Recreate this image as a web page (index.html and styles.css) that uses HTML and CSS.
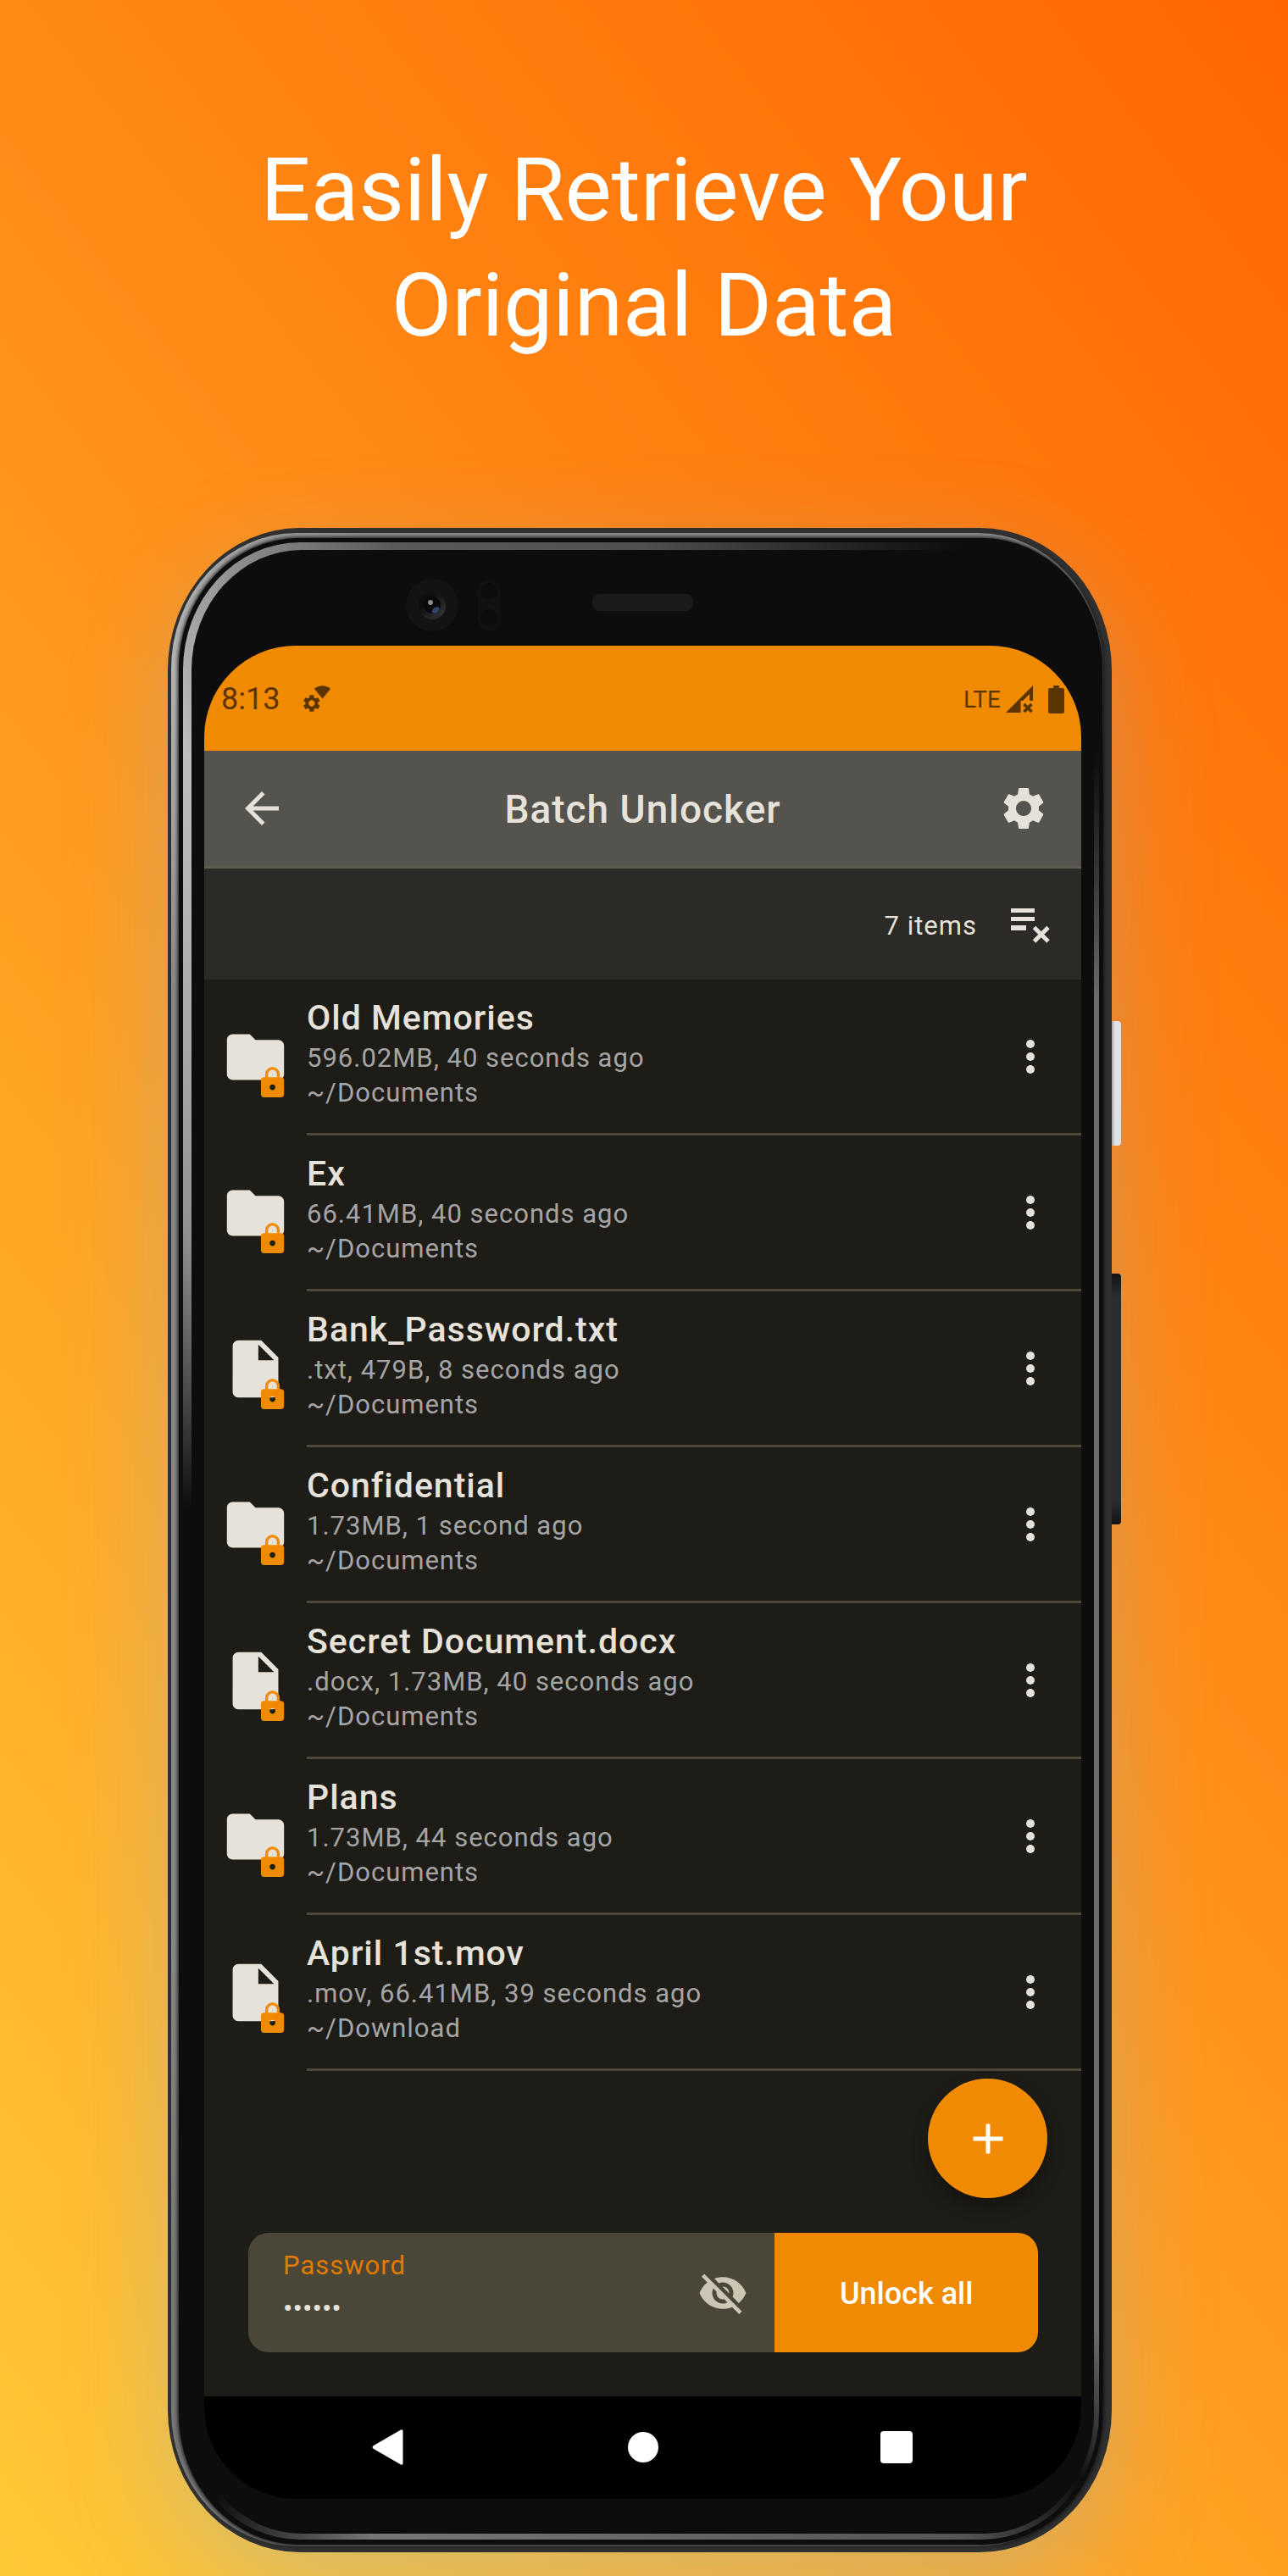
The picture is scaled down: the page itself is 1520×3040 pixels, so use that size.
FILE: index.html
```html
<!DOCTYPE html>
<html lang="en">
<head>
<meta charset="utf-8">
<meta name="viewport" content="width=device-width, initial-scale=1">
<title>Batch Unlocker</title>
<link rel="stylesheet" href="styles.css">
</head>
<body>
<svg class="defs" width="0" height="0" aria-hidden="true">
  <defs>
    <path id="lock-shape" d="M18 8h-1V6c0-2.760-2.240-5-5-5S7 3.240 7 6v2H6c-1.100 0-2 .9-2 2v10c0 1.100.9 2 2 2h12c1.100 0 2-.9 2-2V10c0-1.100-.9-2-2-2zm-6 9c-1.100 0-2-.9-2-2s.9-2 2-2 2 .9 2 2-.9 2-2 2zm3.100-9H8.900V6c0-1.710 1.390-3.100 3.100-3.100 1.710 0 3.100 1.390 3.100 3.100v2z"/>
    <path id="gear-shape" d="M19.140 12.940c.04-.3.060-.61.060-.94 0-.32-.02-.64-.07-.94l2.030-1.580c.18-.14.23-.41.120-.61l-1.920-3.320c-.12-.22-.37-.29-.59-.22l-2.390.96c-.5-.38-1.030-.7-1.620-.94l-.36-2.540c-.04-.24-.24-.41-.48-.41h-3.840c-.24 0-.43.17-.47.41l-.36 2.540c-.59.24-1.130.57-1.620.94l-2.390-.96c-.22-.08-.47 0-.59.22L2.740 8.870c-.12.21-.08.47.120.61l2.030 1.580c-.05.3-.09.63-.09.94s.02.64.070.94l-2.030 1.580c-.18.14-.23.41-.12.61l1.920 3.320c.12.22.37.29.59.22l2.390-.96c.5.38 1.030.7 1.620.94l.36 2.540c.05.24.24.41.48.41h3.840c.24 0 .44-.17.47-.41l.36-2.540c.59-.24 1.130-.56 1.620-.94l2.390.96c.22.080.47 0 .59-.22l1.920-3.320c.12-.22.070-.47-.12-.61l-2.010-1.580zM12 15.600c-1.980 0-3.600-1.620-3.600-3.600s1.620-3.600 3.600-3.600 3.600 1.620 3.600 3.600-1.620 3.600-3.600 3.600z"/>
    <symbol id="folder-locked" viewBox="0 0 24 27">
      <path fill="#e6e1d9" d="M10 4H4c-1.100 0-1.990.9-1.990 2L2 18c0 1.100.9 2 2 2h16c1.100 0 2-.9 2-2V8c0-1.100-.9-2-2-2h-8l-2-2z"/>
      <use href="#lock-shape" fill="#f08a00" transform="translate(11.900 15) scale(.505)"/>
    </symbol>
    <symbol id="file-locked" viewBox="0 0 24 27">
      <path fill="#e6e1d9" d="M6 2c-1.100 0-1.990.9-1.990 2L4 20c0 1.100.89 2 1.990 2H18c1.100 0 2-.9 2-2V8l-6-6H6zm7 7V3.500L18.500 9H13z"/>
      <use href="#lock-shape" fill="#f08a00" transform="translate(11.900 15) scale(.505)"/>
    </symbol>
    <symbol id="more" viewBox="0 0 24 24">
      <circle cx="12" cy="6" r="2"/><circle cx="12" cy="12" r="2"/><circle cx="12" cy="18" r="2"/>
    </symbol>
  </defs>
</svg>
<main class="promo">
  <h1 class="headline">Easily Retrieve Your<br>Original Data</h1>
  <div class="phone">
    <span class="side-key power"></span>
    <span class="side-key volume"></span>
    <div class="rim"><div class="groove"><div class="glare"><div class="bezel">
      <div class="sensors" aria-hidden="true">
        <svg class="camera" viewBox="0 0 62 62">
          <defs>
            <linearGradient id="lens" x1="0" y1="0" x2="1" y2="1"><stop offset=".3" stop-color="#0d0d0d"/><stop offset="1" stop-color="#3a3a3a"/></linearGradient>
          </defs>
          <circle cx="31" cy="31" r="31" fill="#131313"/>
          <circle cx="31" cy="32" r="16" fill="url(#lens)"/>
          <circle cx="31" cy="31" r="10" fill="#08080a"/>
          <ellipse cx="35" cy="37" rx="5" ry="3" fill="#36426a" transform="rotate(-35 35 37)"/>
          <circle cx="29" cy="28" r="3" fill="#8a8a8a"/>
        </svg>
        <svg class="proximity" viewBox="0 0 27 60">
          <rect width="27" height="60" rx="13" fill="#111"/>
          <circle cx="13" cy="14" r="10" fill="#0c0c0c"/><circle cx="13" cy="45" r="10" fill="#0c0c0c"/>
        </svg>
        <span class="speaker"></span>
      </div>
      <div class="screen">
        <div class="status">
          <span class="clock">8:13</span>
          <svg class="status-left-icon" viewBox="0 0 32 32" aria-hidden="true">
            <use href="#gear-shape" transform="translate(-2.400 8.800) scale(1.020)"/>
            <path d="M13 4C18-1 27-1 32 4L22.500 15.500z"/>
          </svg>
          <span class="network">LTE</span>
          <svg class="signal" viewBox="0 0 32 32" aria-hidden="true">
            <path fill-rule="evenodd" d="M0 32L32 0V18H28V10L20 18H17.500V32z"/>
            <path d="M21.500 22L30.500 31M30.500 22L21.500 31" stroke="#5c3400" stroke-width="3.600"/>
          </svg>
          <svg class="battery" viewBox="0 0 19 33" aria-hidden="true">
            <path d="M6 0h7v3h4q2 0 2 2v26q0 2-2 2H2q-2 0-2-2V5q0-2 2-2h4z"/>
          </svg>
        </div>
        <header class="toolbar">
          <button class="icon-button" type="button" aria-label="Back">
            <svg class="icon" viewBox="0 0 24 24"><path d="M20 11H7.830l5.590-5.590L12 4l-8 8 8 8 1.410-1.410L7.830 13H20v-2z"/></svg>
          </button>
          <h2 class="title">Batch Unlocker</h2>
          <button class="icon-button" type="button" aria-label="Settings">
            <svg class="icon" viewBox="0 0 24 24"><use href="#gear-shape"/></svg>
          </button>
        </header>
        <div class="summary">
          <span class="count">7 items</span>
          <button class="clear" type="button" aria-label="Clear list">
            <svg viewBox="0 0 46 41"><path d="M0 0h28v5H0zM0 10h28v5H0zM0 20h18v6H0z"/><path d="M27.500 22.500l16.500 16.500M44 22.500L27.500 39" stroke="#e6e1d9" stroke-width="5"/></svg>
          </button>
        </div>
        <ul class="list">
          <li class="item">
            <svg class="kind" aria-hidden="true"><use href="#folder-locked"/></svg>
            <div class="entry">
              <div class="text"><h3 class="name">Old Memories</h3><p class="meta">596.02MB, 40 seconds ago</p><p class="meta">~/Documents</p></div>
              <button class="icon-button" type="button" aria-label="More options"><svg class="icon"><use href="#more"/></svg></button>
            </div>
          </li>
          <li class="item">
            <svg class="kind" aria-hidden="true"><use href="#folder-locked"/></svg>
            <div class="entry">
              <div class="text"><h3 class="name">Ex</h3><p class="meta">66.41MB, 40 seconds ago</p><p class="meta">~/Documents</p></div>
              <button class="icon-button" type="button" aria-label="More options"><svg class="icon"><use href="#more"/></svg></button>
            </div>
          </li>
          <li class="item">
            <svg class="kind" aria-hidden="true"><use href="#file-locked"/></svg>
            <div class="entry">
              <div class="text"><h3 class="name">Bank_Password.txt</h3><p class="meta">.txt, 479B, 8 seconds ago</p><p class="meta">~/Documents</p></div>
              <button class="icon-button" type="button" aria-label="More options"><svg class="icon"><use href="#more"/></svg></button>
            </div>
          </li>
          <li class="item">
            <svg class="kind" aria-hidden="true"><use href="#folder-locked"/></svg>
            <div class="entry">
              <div class="text"><h3 class="name">Confidential</h3><p class="meta">1.73MB, 1 second ago</p><p class="meta">~/Documents</p></div>
              <button class="icon-button" type="button" aria-label="More options"><svg class="icon"><use href="#more"/></svg></button>
            </div>
          </li>
          <li class="item">
            <svg class="kind" aria-hidden="true"><use href="#file-locked"/></svg>
            <div class="entry">
              <div class="text"><h3 class="name">Secret Document.docx</h3><p class="meta">.docx, 1.73MB, 40 seconds ago</p><p class="meta">~/Documents</p></div>
              <button class="icon-button" type="button" aria-label="More options"><svg class="icon"><use href="#more"/></svg></button>
            </div>
          </li>
          <li class="item">
            <svg class="kind" aria-hidden="true"><use href="#folder-locked"/></svg>
            <div class="entry">
              <div class="text"><h3 class="name">Plans</h3><p class="meta">1.73MB, 44 seconds ago</p><p class="meta">~/Documents</p></div>
              <button class="icon-button" type="button" aria-label="More options"><svg class="icon"><use href="#more"/></svg></button>
            </div>
          </li>
          <li class="item">
            <svg class="kind" aria-hidden="true"><use href="#file-locked"/></svg>
            <div class="entry">
              <div class="text"><h3 class="name">April 1st.mov</h3><p class="meta">.mov, 66.41MB, 39 seconds ago</p><p class="meta">~/Download</p></div>
              <button class="icon-button" type="button" aria-label="More options"><svg class="icon"><use href="#more"/></svg></button>
            </div>
          </li>
        </ul>
        <div class="actions">
          <button class="fab" type="button" aria-label="Add">
            <svg class="icon" viewBox="0 0 24 24"><path d="M19 13h-6v6h-2v-6H5v-2h6V5h2v6h6v2z"/></svg>
          </button>
          <form class="unlock">
            <div class="field">
              <div class="field-text">
                <label class="field-label" for="password">Password</label>
                <input class="field-input" id="password" type="password" value="secret" autocomplete="off">
              </div>
              <button class="icon-button reveal" type="button" aria-label="Show password">
                <svg class="icon" viewBox="0 0 24 24"><path d="M12 7c2.760 0 5 2.240 5 5 0 .65-.13 1.260-.36 1.830l2.920 2.920c1.510-1.260 2.700-2.890 3.430-4.750-1.730-4.390-6-7.500-11-7.500-1.400 0-2.740.25-3.980.7l2.160 2.160C10.740 7.130 11.350 7 12 7zM2 4.270l2.280 2.280.46.460C3.080 8.300 1.780 10.020 1 12c1.730 4.390 6 7.500 11 7.500 1.550 0 3.030-.3 4.380-.84l.42.420L19.730 22 21 20.730 3.270 3 2 4.270zM7.530 9.800l1.550 1.550c-.05.210-.08.430-.08.650 0 1.660 1.340 3 3 3 .22 0 .44-.03.650-.08l1.550 1.550c-.67.330-1.410.530-2.200.530-2.760 0-5-2.240-5-5 0-.79.2-1.530.53-2.200zm4.310-.78l3.150 3.150.02-.16c0-1.660-1.340-3-3-3l-.17.010z"/></svg>
              </button>
            </div>
            <button class="submit" type="button">Unlock all</button>
          </form>
        </div>
        <nav class="navbar" aria-label="System">
          <button class="nav-button" type="button" aria-label="Back"><svg viewBox="0 0 60 60"><path d="M12 27L44 8.500q2.500-1 2.500 1.500v38q0 2.500-2.500 1.500L12 31q-3-2 0-4z"/></svg></button>
          <button class="nav-button" type="button" aria-label="Home"><svg viewBox="0 0 60 60"><circle cx="30" cy="29" r="18"/></svg></button>
          <button class="nav-button" type="button" aria-label="Recent apps"><svg viewBox="0 0 60 60"><rect x="10" y="10" width="38" height="38" rx="4"/></svg></button>
        </nav>
      </div>
    </div></div></div></div>
  </div>
</main>
</body>
</html>
```
FILE: styles.css
```css
* { box-sizing: border-box; }

body {
  margin: 0;
  font-family: Roboto, "Liberation Sans", sans-serif;
  color: #e6e1d9;
}

h1, h2, h3, p, ul { margin: 0; padding: 0; }
ul { list-style: none; }
svg { display: block; fill: currentColor; }

button {
  margin: 0;
  padding: 0;
  border: 0;
  background: none;
  color: inherit;
  font: inherit;
}

.defs { position: absolute; }

.promo {
  padding: 157px 208px 28px 198px;
  overflow: hidden;
  background: linear-gradient(52deg, #ffc837 0%, #ff8010 70%, #ff6600 100%);
}

.headline {
  margin: 0 0 194px 10px;
  font-size: 104px;
  font-weight: 400;
  line-height: 136px;
  text-align: center;
  color: #fff;
}

/* Phone body: nested shells from the outer edge inwards */
.phone {
  position: relative;
  padding: 6px 10px 7px 4px;
  border-radius: 156px / 168px;
  background: #303030;
  box-shadow: 0 40px 120px rgba(115, 185, 240, .3);
}

.side-key {
  position: absolute;
  left: 100%;
  width: 11px;
  border-radius: 0 4px 4px 0;
}

.power {
  top: 582px;
  height: 147px;
  background: linear-gradient(to right, #a8a8a8, #e2e2e2 4px);
}

.volume {
  top: 880px;
  height: 296px;
  background: linear-gradient(#141414, #2c2c2c 28px, #2c2c2c 268px, #141414);
}

.rim {
  padding: 6px 1px 2px 9px;
  border-radius: 148px / 160px;
  background: conic-gradient(#8f8d8f 26deg, #0f0f0f 32deg 150deg, #777 158deg 210deg, #8a8a8c 230deg 320deg, #b4b4b4 332deg, #8f8d8f 345deg);
}

.groove {
  padding: 5px 4px 6px 5px;
  border-radius: 142px / 154px;
  background: #0d0d0d;
  box-shadow: 0 0 5px 1px #0d0d0d;
}

.glare {
  padding: 9px 6px 7px 10px;
  border-radius: 138px / 150px;
  background: conic-gradient(#505050, #0d0d0d 18deg 30deg, #6c6c6e 40deg 150deg, #0d0d0d 155deg, #555 162deg, #777 195deg, #0d0d0d 204deg 274deg, #8f8f8f 304deg, #bdbdbd 330deg, #5a5a5a 346deg, #505050);
}

.bezel {
  padding: 0 15px 41px 15px;
  border-radius: 130px / 142px;
  background: #0d0d0d;
}

.sensors {
  display: flex;
  align-items: center;
  height: 113px;
  padding: 17px 0 0 238px;
}

.camera { width: 62px; height: 62px; }
.proximity { width: 27px; height: 60px; margin-left: 23px; }

.speaker {
  width: 119px;
  height: 20px;
  margin: -6px 0 0 108px;
  border-radius: 8px;
  background: #1a1a1a;
}

.screen {
  overflow: hidden;
  border-radius: 108px;
  background: #1d1c17;
}

.status {
  display: flex;
  align-items: center;
  height: 124px;
  padding: 2px 20px 0 20px;
  background: #f08a00;
  color: #5c3400;
}

.clock { font-size: 36px; }
.status-left-icon { width: 32px; height: 32px; margin-left: 28px; }
.network { margin-left: auto; font-size: 28px; }
.signal { width: 32px; height: 32px; margin-left: 6px; }
.battery { width: 19px; height: 33px; margin-left: 18px; }

.icon, .icon-button { width: 60px; height: 60px; }
.icon-button { flex: none; }

.toolbar {
  display: flex;
  align-items: center;
  height: 139px;
  padding: 0 38px;
  border-bottom: 3px solid #5e5c50;
  background: #54534e;
}

.title {
  flex: 1;
  padding-top: 2px;
  font-size: 46px;
  font-weight: 500;
  letter-spacing: 1px;
  text-align: center;
}

.summary {
  display: flex;
  align-items: center;
  justify-content: flex-end;
  gap: 40px;
  height: 131px;
  padding: 3px 37px 0 0;
  background: #2b2a26;
}

.count { font-size: 31px; letter-spacing: 1px; }
.clear, .clear svg { width: 46px; height: 41px; }

.item { display: flex; height: 184px; }

.kind {
  flex: none;
  width: 81px;
  height: 91px;
  margin: 51px 20px 0 20px;
}

.entry {
  display: flex;
  flex: 1;
  align-items: flex-start;
  justify-content: space-between;
  padding-right: 30px;
  border-bottom: 3px solid #4b4739;
}

.entry .icon-button { margin-top: 61px; }
.text { padding-top: 18px; }

.name {
  font-size: 41px;
  font-weight: 500;
  line-height: 54px;
  letter-spacing: 1px;
}

.meta {
  font-size: 31px;
  line-height: 41px;
  letter-spacing: 1px;
  color: #a5a5a5;
}

.actions {
  display: flex;
  flex-direction: column;
  align-items: flex-end;
  gap: 41px;
  padding: 9px 40px 52px 52px;
}

.fab {
  display: grid;
  place-items: center;
  width: 141px;
  height: 141px;
  border-radius: 50%;
  background: #f08a00;
  color: #fff;
  box-shadow: 0 10px 20px rgba(0, 0, 0, .3);
}

.unlock {
  display: grid;
  grid-template-columns: 2fr 1fr;
  align-self: stretch;
  height: 141px;
  margin-right: 11px;
  overflow: hidden;
  border-radius: 24px;
}

.field {
  display: flex;
  align-items: center;
  padding: 0 31px 0 41px;
  background: #4b4738;
}

.field-text { flex: 1; min-width: 0; }

.field-label {
  display: block;
  font-size: 31px;
  line-height: 36px;
  letter-spacing: 1px;
  color: #e07a00;
}

.field-input {
  display: block;
  width: 100%;
  height: 64px;
  padding: 0;
  border: 0;
  outline: 0;
  background: none;
  color: #e6e1d9;
  font: 400 34px Roboto, sans-serif;
}

.reveal { color: #cdc6b4; }

.submit {
  padding-top: 2px;
  background: #f08a00;
  color: #fff;
  font-size: 36px;
  font-weight: 500;
}

.navbar {
  display: flex;
  align-items: center;
  justify-content: center;
  gap: 240px;
  height: 121px;
  background: #000;
  color: #fff;
}

.nav-button, .nav-button svg { width: 60px; height: 60px; }
```
